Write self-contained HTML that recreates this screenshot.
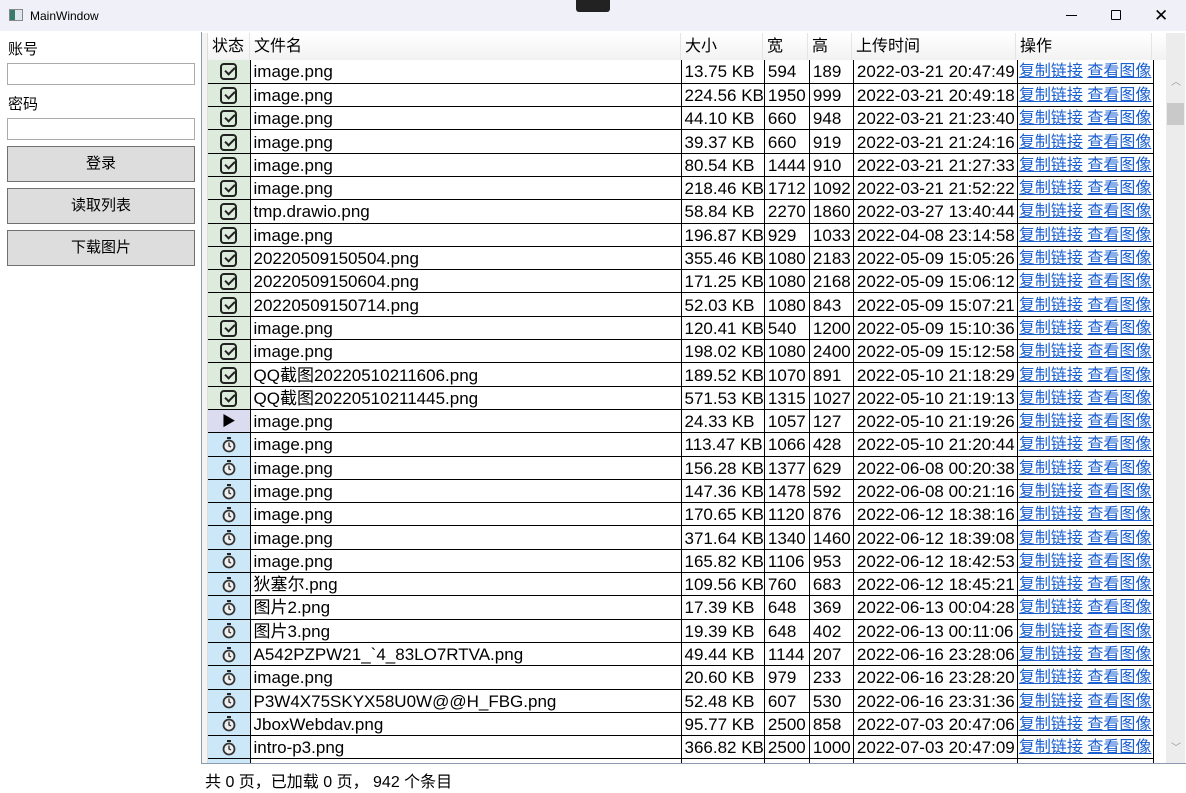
<!DOCTYPE html>
<html><head><meta charset="utf-8"><style>
*{margin:0;padding:0;box-sizing:border-box}
body{width:1186px;height:793px;background:#fff;font-family:"Liberation Sans","Noto Sans CJK SC",sans-serif;position:relative;overflow:hidden;color:#000}
#title{position:absolute;left:0;top:0;width:1186px;height:31px;background:#eff0f8;font-size:12px}
#title .t{position:absolute;left:30px;top:9px}
#title .ic{position:absolute;left:9px;top:9px;width:14px;height:12px;border:1px solid #888;background:linear-gradient(90deg,#3a7a6a 0 40%,#dfe6ee 40%)}
.lbl{position:absolute;left:8px;font-size:15px}
.inp{position:absolute;left:7px;width:188px;height:22px;border:1px solid #aaa;background:#fff}
.btn{position:absolute;left:7px;width:188px;height:36px;border:1px solid #707070;background:#dddddd;font-size:15px;text-align:center;line-height:34px}
#grid{position:absolute;left:201px;top:32px;width:985px;height:732px;border-left:1px solid #8a9ab0;border-bottom:1px solid #8a9ab0}
#hdr{position:absolute;left:208px;top:33px;height:27px;width:958px;background:linear-gradient(#fff,#f2f2f2);font-size:16px}
#hdr div{position:absolute;top:0;height:27px;line-height:27px;padding-left:4px;border-right:1px solid #e4e4e4}
#rh{position:absolute;left:202px;top:33px;width:6px;height:730px;background:#f4f4f4;border-right:1px solid #ddd}
#clip{position:absolute;left:208px;top:60px;width:958px;height:703px;overflow:hidden}
table{position:absolute;left:0;top:0;border-collapse:collapse;table-layout:fixed;font-size:17px}
td{height:23.31px;border-right:1px solid #000;border-bottom:1px solid #000;padding:2px 0 0 3px;white-space:nowrap;overflow:hidden;line-height:20px}
td:first-child{padding:0;text-align:center}
tr.c td:first-child{background:#dcebdc}
tr.p td:first-child{background:#dbdcef}
tr.w td:first-child{background:#cce8f8}
td:last-child{padding-left:1px;font-size:16px}
td:last-child a{color:#1a5fd0;text-decoration:underline}
.ck{display:inline-block;width:17px;height:17px;border:2px solid #222;border-radius:4px;position:relative;vertical-align:middle}
.ck:after{content:"";position:absolute;left:3px;top:2px;width:8px;height:4px;border-left:2px solid #222;border-bottom:2px solid #222;transform:rotate(-45deg)}
#sb{position:absolute;left:1166px;top:33px;width:19px;height:730px;background:#ececec}
#th{position:absolute;left:1167px;top:103px;width:17px;height:22px;background:#c9c9c9}
#foot{position:absolute;left:205px;top:768px;font-size:16px}
</style></head><body>
<div id="title"><div class="ic"></div><div class="t">MainWindow</div>
<div style="position:absolute;left:576px;top:0;width:34px;height:12px;background:#222;border-radius:0 0 3px 3px"></div>
<div style="position:absolute;left:1066px;top:15px;width:11px;height:1px;background:#000"></div>
<div style="position:absolute;left:1111px;top:10px;width:10px;height:10px;border:1px solid #000;border-radius:1px"></div>
<div style="position:absolute;left:1154px;top:6px;font-size:17px">✕</div>
</div>
<div class="lbl" style="top:38px">账号</div>
<div class="inp" style="top:63px"></div>
<div class="lbl" style="top:93px">密码</div>
<div class="inp" style="top:118px"></div>
<div class="btn" style="top:146px">登录</div>
<div class="btn" style="top:188px">读取列表</div>
<div class="btn" style="top:230px">下载图片</div>
<div id="grid"></div>
<div id="rh"></div>
<div id="hdr">
<div style="left:0;width:42px">状态</div><div style="left:42px;width:431px">文件名</div><div style="left:473px;width:82px">大小</div><div style="left:555px;width:45px">宽</div><div style="left:600px;width:44px">高</div><div style="left:644px;width:164px">上传时间</div><div style="left:808px;width:136px">操作</div>
</div>
<div id="clip"><table>
<colgroup><col style="width:42px"><col style="width:431px"><col style="width:82px"><col style="width:45px"><col style="width:44px"><col style="width:164px"><col style="width:136px"></colgroup>
<tbody id="tb">
</tbody></table></div>
<div id="sb"><div style="position:absolute;left:5px;top:40px;font-size:10px;color:#999">︿</div><div style="position:absolute;left:5px;top:706px;font-size:10px;color:#999">﹀</div></div>
<div id="th"></div>
<div id="foot">共 0 页，已加载 0 页， 942 个条目</div>
<script>
var d=[
["c","image.png","13.75 KB",594,189,"2022-03-21 20:47:49"],
["c","image.png","224.56 KB",1950,999,"2022-03-21 20:49:18"],
["c","image.png","44.10 KB",660,948,"2022-03-21 21:23:40"],
["c","image.png","39.37 KB",660,919,"2022-03-21 21:24:16"],
["c","image.png","80.54 KB",1444,910,"2022-03-21 21:27:33"],
["c","image.png","218.46 KB",1712,1092,"2022-03-21 21:52:22"],
["c","tmp.drawio.png","58.84 KB",2270,1860,"2022-03-27 13:40:44"],
["c","image.png","196.87 KB",929,1033,"2022-04-08 23:14:58"],
["c","20220509150504.png","355.46 KB",1080,2183,"2022-05-09 15:05:26"],
["c","20220509150604.png","171.25 KB",1080,2168,"2022-05-09 15:06:12"],
["c","20220509150714.png","52.03 KB",1080,843,"2022-05-09 15:07:21"],
["c","image.png","120.41 KB",540,1200,"2022-05-09 15:10:36"],
["c","image.png","198.02 KB",1080,2400,"2022-05-09 15:12:58"],
["c","QQ截图20220510211606.png","189.52 KB",1070,891,"2022-05-10 21:18:29"],
["c","QQ截图20220510211445.png","571.53 KB",1315,1027,"2022-05-10 21:19:13"],
["p","image.png","24.33 KB",1057,127,"2022-05-10 21:19:26"],
["w","image.png","113.47 KB",1066,428,"2022-05-10 21:20:44"],
["w","image.png","156.28 KB",1377,629,"2022-06-08 00:20:38"],
["w","image.png","147.36 KB",1478,592,"2022-06-08 00:21:16"],
["w","image.png","170.65 KB",1120,876,"2022-06-12 18:38:16"],
["w","image.png","371.64 KB",1340,1460,"2022-06-12 18:39:08"],
["w","image.png","165.82 KB",1106,953,"2022-06-12 18:42:53"],
["w","狄塞尔.png","109.56 KB",760,683,"2022-06-12 18:45:21"],
["w","图片2.png","17.39 KB",648,369,"2022-06-13 00:04:28"],
["w","图片3.png","19.39 KB",648,402,"2022-06-13 00:11:06"],
["w","A542PZPW21_`4_83LO7RTVA.png","49.44 KB",1144,207,"2022-06-16 23:28:06"],
["w","image.png","20.60 KB",979,233,"2022-06-16 23:28:20"],
["w","P3W4X75SKYX58U0W@@H_FBG.png","52.48 KB",607,530,"2022-06-16 23:31:36"],
["w","JboxWebdav.png","95.77 KB",2500,858,"2022-07-03 20:47:06"],
["w","intro-p3.png","366.82 KB",2500,1000,"2022-07-03 20:47:09"]];
var ic={c:'<span class="ck"></span>',p:'<span style="font-size:14px">▶</span>',
w:'<svg width="14" height="16" viewBox="0 0 14 16" style="vertical-align:middle"><rect x="5" y="0" width="4" height="2" fill="#222"/><circle cx="7" cy="9" r="5.5" fill="#f0f0f0" stroke="#333" stroke-width="1.8"/><path d="M7 5.5v3.5l2 1" stroke="#333" stroke-width="1.4" fill="none"/></svg>'};
var h='';d.forEach(function(r){h+='<tr class="'+r[0]+'"><td>'+ic[r[0]]+'</td><td>'+r[1]+'</td><td>'+r[2]+'</td><td>'+r[3]+'</td><td>'+r[4]+'</td><td>'+r[5]+'</td><td><a>复制链接</a> <a>查看图像</a></td></tr>'});
h+='<tr class="w"><td></td><td></td><td></td><td></td><td></td><td></td><td></td></tr>';
document.getElementById('tb').innerHTML=h;
</script>
</body></html>
